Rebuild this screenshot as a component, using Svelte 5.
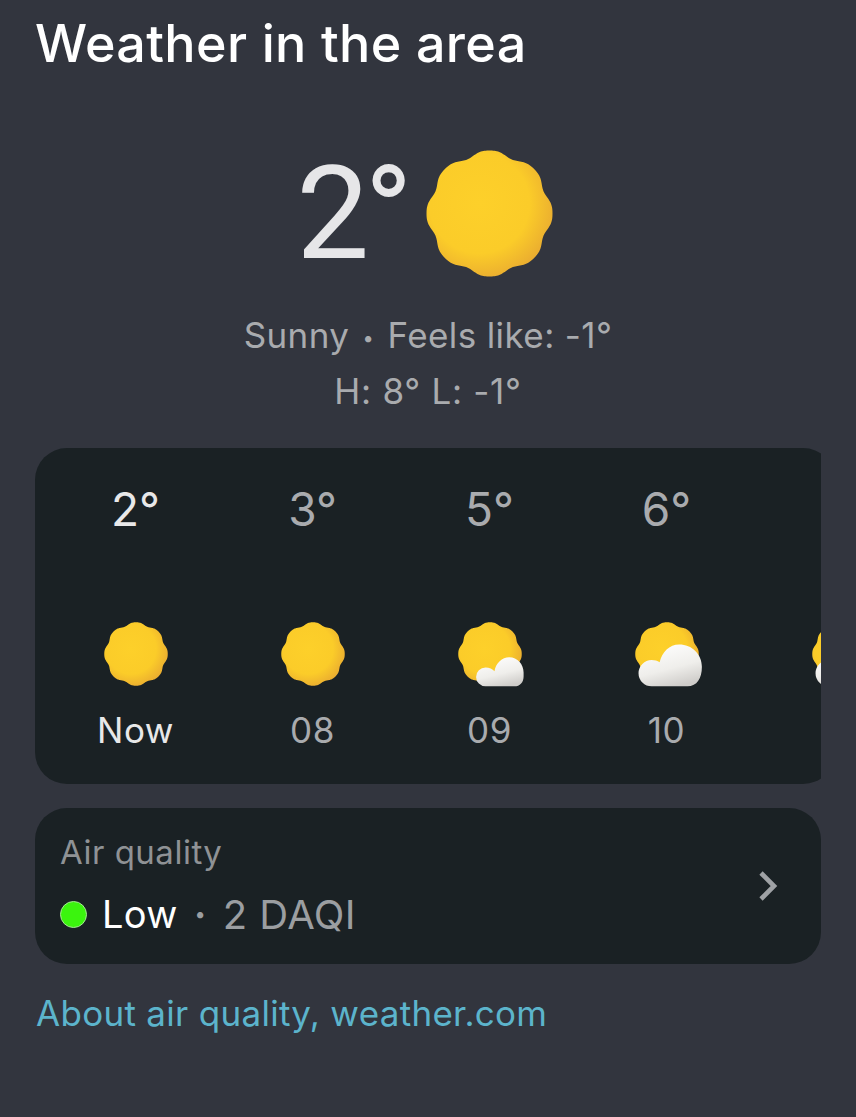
<script>
  const sunPath = (() => {
    const pts = [];
    const n = 320;
    for (let i = 0; i < n; i++) {
      const t = (i / n) * Math.PI * 2;
      const notch = Math.pow((1 - Math.cos(8 * t)) / 2, 1.7);
      const r = 49.6 - 3.6 * notch;
      pts.push(`${(50 + r * Math.sin(t)).toFixed(2)} ${(50 - r * Math.cos(t)).toFixed(2)}`);
    }
    return 'M' + pts.join('L') + 'Z';
  })();

  const hours = [
    { temp: '2°', label: 'Now', cloud: 'none', now: true },
    { temp: '3°', label: '08', cloud: 'none' },
    { temp: '5°', label: '09', cloud: 'small' },
    { temp: '6°', label: '10', cloud: 'large' },
    { temp: '7°', label: '11', cloud: 'large' }
  ];
</script>

<svg class="defs" aria-hidden="true">
  <defs>
    <radialGradient id="sunFill" cx="0.42" cy="0.42" r="0.64">
      <stop offset="0" stop-color="#fdd02a" />
      <stop offset="0.62" stop-color="#fbcc29" />
      <stop offset="1" stop-color="#e8a931" />
    </radialGradient>
    <linearGradient id="cloudFill" x1="0.2" y1="0" x2="0.6" y2="1">
      <stop offset="0" stop-color="#ffffff" />
      <stop offset="0.6" stop-color="#efeeeb" />
      <stop offset="1" stop-color="#cfcdca" />
    </linearGradient>
  </defs>
</svg>

<main class="page">
  <h1>Weather in the area</h1>

  <section class="current">
    <div class="now-row">
      <span class="big-temp"><span class="big-digit">2</span>°</span>
      <svg class="big-sun" viewBox="0 0 100 100" aria-hidden="true">
        <path d={sunPath} fill="url(#sunFill)" />
      </svg>
    </div>
    <p class="summary">Sunny <span class="sep">•</span> Feels like: -1°</p>
    <p class="summary range">H: 8° L: -1°</p>
  </section>

  <section class="hourly">
    <div class="hourly-track">
      {#each hours as h}
        <div class="hour">
          <div class="hour-temp" class:now={h.now}>{h.temp}</div>
          <svg class="hour-icon" viewBox="0 0 100 100" aria-hidden="true">
            <path d={sunPath} fill="url(#sunFill)" />
            {#if h.cloud === 'small'}
              <path
                d="M43 100.5A14.7 14.7 0 0 1 43 71C49 71 54 73 57 77C59 64 69 55 80 55C93 55 102.5 66 102.5 79L102.5 85C102.5 94 97 100.5 88 100.5Z"
                fill="url(#cloudFill)"
              />
            {:else if h.cloud === 'large'}
              <path
                d="M26 100.5A20.5 20.5 0 0 1 26 59.5C31 59.5 35 60.5 38.5 63C42 47 54 35 69 35C89 35 104.5 50 104.5 70C104.5 88 97 100.5 82 100.5Z"
                fill="url(#cloudFill)"
              />
            {/if}
          </svg>
          <div class="hour-label" class:now={h.now}>{h.label}</div>
        </div>
      {/each}
    </div>
  </section>

  <section class="air">
    <div class="air-text">
      <div class="air-title">Air quality</div>
      <div class="air-value">
        <span class="dot"></span>
        <span class="low">Low</span>
        <span class="sep2">•</span>
        <span class="daqi">2 DAQI</span>
      </div>
    </div>
    <svg class="chev" viewBox="0 0 24 32" aria-hidden="true">
      <path d="M4 3L17 16L4 29" fill="none" stroke="#9fa2a5" stroke-width="4.6" />
    </svg>
  </section>

  <a class="about" href="#about">About air quality, weather.com</a>
</main>

<style>
  :global(body) {
    margin: 0;
    background: #32353e;
  }
  .defs {
    position: absolute;
    width: 0;
    height: 0;
  }
  .page {
    width: 856px;
    height: 1117px;
    box-sizing: border-box;
    padding: 0 35px;
    background: #32353e;
    font-family: Inter, Roboto, sans-serif;
    overflow: hidden;
  }
  h1 {
    margin: 0;
    padding-top: 13px;
    font-size: 52px;
    line-height: 62px;
    font-weight: 500;
    color: #ffffff;
    letter-spacing: 0.37px;
  }
  .current {
    display: flex;
    flex-direction: column;
    align-items: center;
  }
  .now-row {
    display: flex;
    align-items: center;
    gap: 13px;
    margin-top: 75px;
    padding-right: 7px;
    height: 127px;
  }
  .big-temp {
    font-family: Roboto, sans-serif;
    font-weight: 400;
    font-size: 130px;
    line-height: 127px;
    color: #e6e6e8;
  }
  .big-digit {
    letter-spacing: -5px;
  }
  .big-sun {
    width: 127px;
    height: 127px;
    display: block;
  }
  .summary {
    margin: 0;
    font-size: 35px;
    line-height: 56px;
    color: #a9abae;
    letter-spacing: 0.4px;
  }
  .summary:first-of-type {
    margin-top: 30px;
  }
  .range {
    letter-spacing: 0.7px;
  }
  .sep {
    font-size: 20px;
    line-height: 0;
    vertical-align: 3px;
    margin: 0 3px;
  }
  .hourly {
    margin-top: 29px;
    width: 786px;
    height: 336px;
    overflow: hidden;
  }
  .hourly-track {
    width: 800px;
    height: 336px;
    box-sizing: border-box;
    background: #1a2124;
    border-radius: 32px;
    padding-left: 12px;
    display: flex;
    overflow: hidden;
  }
  .hour {
    flex: 0 0 177px;
    display: flex;
    flex-direction: column;
    align-items: center;
  }
  .hour-temp {
    margin-top: 32px;
    font-size: 46px;
    line-height: 58px;
    color: #a9abae;
  }
  .hour-temp.now {
    color: #e8e8e9;
  }
  .hour-icon {
    width: 64px;
    height: 64px;
    margin-top: 84px;
    overflow: visible;
    display: block;
  }
  .hour-label {
    margin-top: 20px;
    font-size: 35px;
    line-height: 48px;
    color: #a9abae;
    letter-spacing: 0.6px;
  }
  .hour-label.now {
    color: #e8e8e9;
  }
  .air {
    margin-top: 24px;
    width: 786px;
    height: 156px;
    box-sizing: border-box;
    background: #1a2124;
    border-radius: 32px;
    padding: 0 40px 0 25px;
    display: flex;
    align-items: center;
    justify-content: space-between;
  }
  .air-text {
    margin-top: 2px;
  }
  .air-title {
    font-size: 33px;
    line-height: 44px;
    color: #8f9295;
    letter-spacing: 0.5px;
    margin-top: -4px;
  }
  .air-value {
    display: flex;
    align-items: center;
    margin-top: 14px;
    height: 52px;
  }
  .dot {
    width: 27px;
    height: 27px;
    box-sizing: border-box;
    border-radius: 50%;
    background: #3bf40e;
    border: 1px solid #a5e894;
    margin-right: 15px;
  }
  .low {
    font-size: 38px;
    color: #ffffff;
    letter-spacing: 0.3px;
  }
  .sep2 {
    font-size: 20px;
    color: #9b9ea1;
    margin: 0 17px;
  }
  .daqi {
    font-size: 40px;
    color: #9b9ea1;
    letter-spacing: 0.4px;
  }
  .chev {
    width: 24px;
    height: 32px;
    display: block;
  }
  .about {
    display: block;
    margin-top: 23px;
    margin-left: 1px;
    font-size: 35px;
    line-height: 52px;
    color: #5cb4cc;
    text-decoration: none;
    letter-spacing: 0.3px;
  }
</style>
